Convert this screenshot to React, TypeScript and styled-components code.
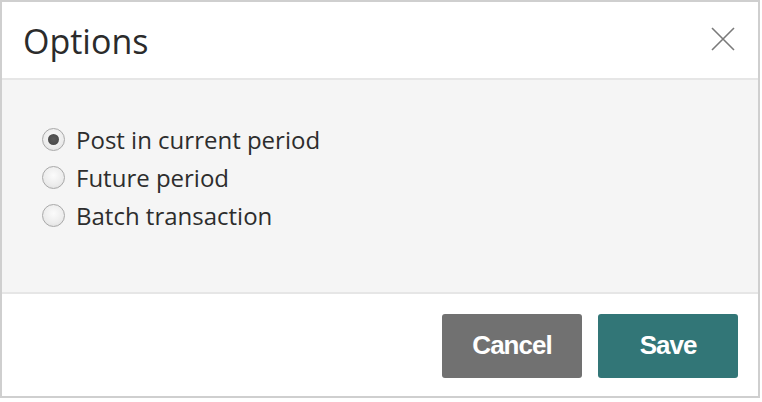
import React, { useState } from "react";
import styled, { createGlobalStyle } from "styled-components";

const Global = createGlobalStyle`
  html, body { margin: 0; padding: 0; background: #ffffff; }
  * { box-sizing: border-box; }
`;

const Dialog = styled.div`
  width: 760px;
  height: 398px;
  border: 2px solid #cfcfcf;
  background: #ffffff;
  display: flex;
  flex-direction: column;
  font-family: "Open Sans", "Noto Sans", sans-serif;
`;

const Header = styled.div`
  height: 78px;
  flex: none;
  display: flex;
  align-items: center;
  justify-content: space-between;
  padding: 0 22px 0 21px;
  border-bottom: 2px solid #e6e6e6;
`;

const Title = styled.h1`
  margin: 0;
  font-size: 34px;
  font-weight: 400;
  color: #2b2b2b;
  line-height: 1;
  padding-top: 1px;
`;

const CloseButton = styled.button`
  width: 26px;
  height: 26px;
  padding: 0;
  border: none;
  background: transparent;
  display: flex;
  align-items: center;
  justify-content: center;
  cursor: pointer;
  margin-top: -3px;
`;

const Body = styled.div`
  height: 214px;
  flex: none;
  background: #f5f5f5;
  border-bottom: 2px solid #e6e6e6;
  padding: 43px 0 0 40px;
  display: flex;
  flex-direction: column;
  gap: 5px;
`;

const OptionRow = styled.label`
  display: flex;
  align-items: center;
  gap: 11px;
  height: 33px;
  font-size: 24px;
  color: #2d2d2d;
  cursor: pointer;
`;

const RadioCircle = styled.span<{ $checked: boolean }>`
  width: 23px;
  height: 23px;
  border-radius: 50%;
  flex: none;
  border: 1.5px solid #a9a9a9;
  background: radial-gradient(circle at 50% 40%, #fbfbfb 0%, #ececec 60%, #d8d8d8 100%);
  display: flex;
  align-items: center;
  justify-content: center;
  &::after {
    content: "";
    width: 11px;
    height: 11px;
    border-radius: 50%;
    background: radial-gradient(circle at 50% 45%, #5a5a5a 0%, #4a4a4a 70%, #6a6a6a 100%);
    display: ${(p) => (p.$checked ? "block" : "none")};
  }
`;

const Footer = styled.div`
  flex: 1;
  display: flex;
  align-items: center;
  justify-content: flex-end;
  gap: 16px;
  padding: 0 20px 0 0;
`;

const Button = styled.button<{ $variant: "cancel" | "save" }>`
  width: 140px;
  height: 64px;
  border: none;
  border-radius: 3px;
  background: ${(p) => (p.$variant === "save" ? "#327677" : "#717171")};
  color: #ffffff;
  font-family: "Liberation Sans", Arial, sans-serif;
  font-weight: 700;
  font-size: 26px;
  letter-spacing: -1px;
  cursor: pointer;
  margin-top: 1px;
`;

const options = ["Post in current period", "Future period", "Batch transaction"];

export default function App() {
  const [selected, setSelected] = useState(0);
  return (
    <>
      <Global />
      <Dialog>
        <Header>
          <Title>Options</Title>
          <CloseButton aria-label="Close">
            <svg width="24" height="24" viewBox="0 0 24 24">
              <path d="M1 1 L23 23 M23 1 L1 23" stroke="#7a7a7a" strokeWidth="1.6" fill="none" />
            </svg>
          </CloseButton>
        </Header>
        <Body>
          {options.map((o, i) => (
            <OptionRow key={o} onClick={() => setSelected(i)}>
              <RadioCircle $checked={selected === i} />
              {o}
            </OptionRow>
          ))}
        </Body>
        <Footer>
          <Button $variant="cancel">Cancel</Button>
          <Button $variant="save">Save</Button>
        </Footer>
      </Dialog>
    </>
  );
}
